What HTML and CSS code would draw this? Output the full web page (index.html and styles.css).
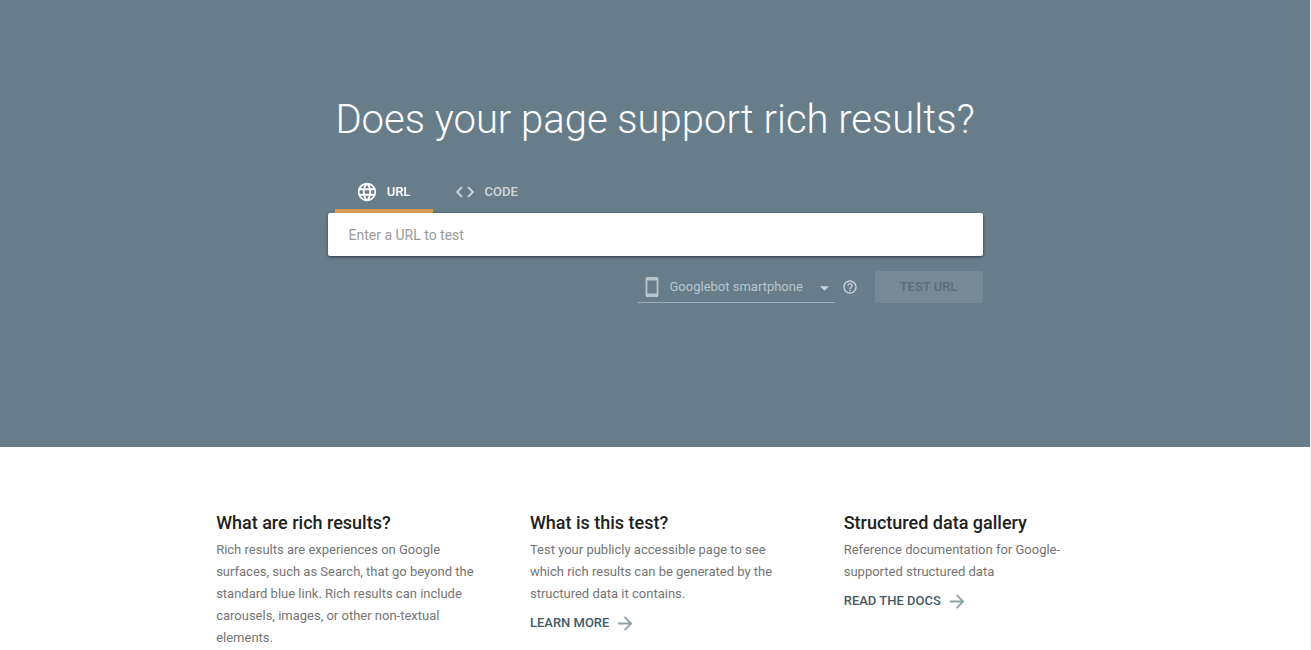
FILE: index.html
```
<!DOCTYPE html>
<html lang="en">

<head>
    <meta charset="UTF-8" />
    <meta name="viewport" content="width=device-width, initial-scale=1.0" />
    <title>Rich Results Test</title>
    <link rel="stylesheet" href="styles.css">
</head>

<body>
    <header class="hero">
        <h1 class="hero-title">Does your page support rich results?</h1>

        <form class="test-form">
            <div class="tabs" role="tablist">
                <button class="tab active" type="button" role="tab" aria-selected="true">
                    <svg class="icon" viewBox="0 0 24 24" aria-hidden="true">
                        <path d="M11.99 2C6.47 2 2 6.48 2 12s4.47 10 9.99 10C17.52 22 22 17.52 22 12S17.52 2 11.99 2zm6.93 6h-2.95c-.32-1.25-.78-2.45-1.38-3.56 1.84.63 3.37 1.91 4.33 3.56zM12 4.04c.83 1.2 1.48 2.53 1.91 3.96h-3.82c.43-1.43 1.08-2.76 1.91-3.96zM4.26 14C4.1 13.36 4 12.69 4 12s.1-1.36.26-2h3.38c-.08.66-.14 1.32-.14 2s.06 1.34.14 2H4.26zm.82 2h2.95c.32 1.25.78 2.45 1.38 3.56-1.84-.63-3.37-1.9-4.33-3.56zm2.95-8H5.08c.96-1.66 2.49-2.93 4.33-3.56C8.81 5.55 8.35 6.75 8.03 8zM12 19.96c-.83-1.2-1.48-2.53-1.91-3.96h3.82c-.43 1.43-1.08 2.76-1.91 3.96zM14.34 14H9.66c-.09-.66-.16-1.32-.16-2s.07-1.35.16-2h4.68c.09.65.16 1.32.16 2s-.07 1.34-.16 2zm.25 5.56c.6-1.11 1.06-2.31 1.38-3.56h2.95c-.96 1.65-2.49 2.93-4.33 3.56zM16.36 14c.08-.66.14-1.32.14-2s-.06-1.34-.14-2h3.38c.16.64.26 1.31.26 2s-.1 1.36-.26 2h-3.38z" />
                    </svg>
                    <span>URL</span>
                </button>
                <button class="tab" type="button" role="tab" aria-selected="false">
                    <svg class="icon" viewBox="0 0 24 24" aria-hidden="true">
                        <path d="M9.4 16.6L4.8 12l4.6-4.6L8 6l-6 6 6 6 1.4-1.4zm5.2 0l4.6-4.6-4.6-4.6L16 6l6 6-6 6-1.4-1.4z" />
                    </svg>
                    <span>CODE</span>
                </button>
            </div>

            <input class="url-input" type="text" placeholder="Enter a URL to test" aria-label="Enter a URL to test">

            <div class="actions">
                <div class="agent">
                    <svg class="icon" viewBox="0 0 24 24" aria-hidden="true">
                        <path d="M17 1H7c-1.1 0-2 .9-2 2v18c0 1.1.9 2 2 2h10c1.1 0 2-.9 2-2V3c0-1.1-.9-2-2-2zm0 18H7V5h10v14z" />
                    </svg>
                    <select class="agent-select" aria-label="User agent">
                        <option>Googlebot smartphone</option>
                        <option>Googlebot desktop</option>
                    </select>
                    <svg class="arrow" viewBox="0 0 10 5" aria-hidden="true">
                        <path d="M0 0h10L5 5z" />
                    </svg>
                </div>
                <button class="help-btn" type="button" aria-label="Help">
                    <svg viewBox="0 0 24 24" aria-hidden="true">
                        <path d="M11 18h2v-2h-2v2zm1-16C6.48 2 2 6.48 2 12s4.48 10 10 10 10-4.48 10-10S17.52 2 12 2zm0 18c-4.41 0-8-3.59-8-8s3.59-8 8-8 8 3.59 8 8-3.59 8-8 8zm0-14c-2.21 0-4 1.79-4 4h2c0-1.1.9-2 2-2s2 .9 2 2c0 2-3 1.75-3 5h2c0-2.25 3-2.5 3-5 0-2.21-1.79-4-4-4z" />
                    </svg>
                </button>
                <button class="test-btn" type="submit" disabled>TEST URL</button>
            </div>
        </form>
    </header>

    <main class="info">
        <section class="info-col">
            <h2>What are rich results?</h2>
            <p>Rich results are experiences on Google surfaces, such as Search, that go beyond the standard blue link. Rich results can include carousels, images, or other non-textual elements.</p>
        </section>
        <section class="info-col">
            <h2>What is this test?</h2>
            <p>Test your publicly accessible page to see which rich results can be generated by the structured data it contains.</p>
            <a class="more" href="#">LEARN MORE
                <svg viewBox="0 0 16 16" aria-hidden="true">
                    <path d="M1 8h13M8 1l7 7-7 7" />
                </svg>
            </a>
        </section>
        <section class="info-col">
            <h2>Structured data gallery</h2>
            <p>Reference documentation for Google-supported structured data</p>
            <a class="more" href="#">READ THE DOCS
                <svg viewBox="0 0 16 16" aria-hidden="true">
                    <path d="M1 8h13M8 1l7 7-7 7" />
                </svg>
            </a>
        </section>
    </main>
</body>

</html>
```
FILE: styles.css
```
* {
    box-sizing: border-box;
}

body {
    margin: 0;
    border-right: 1px solid #f1f3f4;
    font-family: Roboto, "Liberation Sans", sans-serif;
    background: #fff;
    color: #212121;
}

button,
input,
select {
    font-family: inherit;
}

.hero {
    padding: 95px 0 144px;
    background: #677d8a;
}

.hero-title {
    margin: 0 0 25px;
    font-size: 40px;
    line-height: 50px;
    font-weight: 300;
    text-align: center;
    color: #fff;
}

.test-form {
    width: 50%;
    min-width: 480px;
    margin: 0 auto;
}

.tabs {
    display: flex;
    padding-left: 7px;
}

.tab {
    display: flex;
    align-items: center;
    justify-content: center;
    gap: 9px;
    min-width: 98px;
    height: 43px;
    padding: 4px 22px 0 21px;
    border: none;
    border-bottom: 4px solid transparent;
    background: none;
    color: #d0d8dc;
    font-size: 13px;
    font-weight: 500;
    cursor: pointer;
}

.tab.active {
    color: #fff;
    border-bottom-color: #d39e54;
}

.icon {
    width: 22px;
    height: 22px;
    fill: currentColor;
}

.url-input {
    display: block;
    width: 100%;
    height: 43px;
    padding: 0 21px;
    border: none;
    border-radius: 2px;
    background: #fff;
    box-shadow: 0 1px 3px rgba(0, 0, 0, 0.5);
    font-size: 14px;
    color: #212121;
    outline: none;
}

.url-input::placeholder {
    color: #9b9b9b;
}

.actions {
    display: flex;
    justify-content: flex-end;
    align-items: center;
    margin-top: 15px;
}

.agent {
    display: flex;
    align-items: center;
    width: 197px;
    height: 32px;
    padding: 0 6px 0 3px;
    border-bottom: 1px solid #a0afb8;
    color: #b8c5cd;
}

.agent-select {
    flex: 1;
    min-width: 0;
    height: 30px;
    margin-left: 7px;
    padding: 0;
    border: none;
    background: none;
    appearance: none;
    color: inherit;
    font-size: 13px;
}

.agent-select option {
    color: #212121;
}

.arrow {
    width: 9px;
    height: 5px;
    margin-top: 3px;
    fill: #c8d2d8;
    pointer-events: none;
}

.help-btn {
    width: 16px;
    height: 16px;
    margin: 0 17px 0 7px;
    padding: 0;
    border: none;
    background: none;
    cursor: pointer;
}

.help-btn svg {
    display: block;
    fill: #c8d2d8;
}

.test-btn {
    width: 108px;
    height: 32px;
    padding: 0 0 2px;
    border: none;
    border-radius: 2px;
    background: #768a96;
    color: #5b6c76;
    font-size: 13px;
    font-weight: 500;
}

.info {
    display: grid;
    grid-template-columns: repeat(3, 1fr);
    gap: 44px;
    padding: 64px 15% 0 16.5%;
}

.info-col h2 {
    margin: 0 0 4px;
    font-size: 18px;
    line-height: 24px;
    font-weight: 500;
}

.info-col p {
    margin: 0;
    font-size: 13px;
    line-height: 22px;
    color: #757575;
}

.more {
    display: inline-flex;
    align-items: center;
    gap: 8px;
    margin-top: 8px;
    font-size: 13px;
    line-height: 20px;
    font-weight: 500;
    color: #455a64;
    text-decoration: none;
}

.more svg {
    width: 15px;
    height: 15px;
    fill: none;
    stroke: #90a4ae;
    stroke-width: 2;
}
```
